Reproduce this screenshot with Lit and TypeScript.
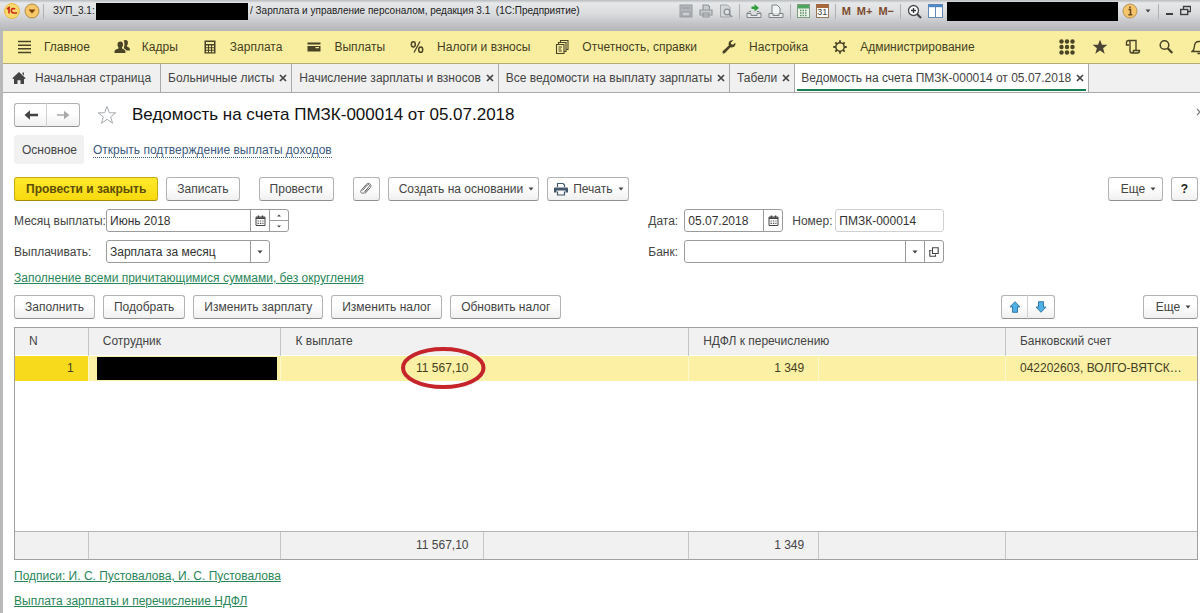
import { LitElement, html, css, svg, TemplateResult } from "lit";
import { customElement, state } from "lit/decorators.js";
import { classMap } from "lit/directives/class-map.js";

const icon = (w: number, h: number, body: unknown) =>
  html`<svg class="ic" width=${w} height=${h} viewBox="0 0 ${w} ${h}" aria-hidden="true">${body}</svg>`;

const stroke = (d: string, color = "#4a4426", width = 1.4) =>
  svg`<path d=${d} fill="none" stroke=${color} stroke-width=${width}></path>`;
const fill = (d: string, color = "#4a4426") => svg`<path d=${d} fill=${color} fill-rule="evenodd"></path>`;

const icons = {
  logo: icon(18, 18, svg`
    <circle cx="9" cy="9" r="7.5" fill="#fbd96b" stroke="#e8b94c"></circle>
    <path d="M4 7l2-1.500v6M12 7.300c-.6-1-3.700-1.300-3.700 1.300 0 2.400 1.700 2.500 5.700 2.400" fill="none" stroke="#c8261c" stroke-width="1.600"></path>`),
  circleDown: icon(16, 16, svg`
    <circle cx="8" cy="8" r="7" fill="#f8c766" stroke="#b08a4a"></circle>
    <path d="M4.500 6.500h7L8 10.500z" fill="#7a3f10"></path>`),
  save: icon(14, 14, svg`<rect x="1" y="1" width="12" height="12" fill="#b4b8bc" stroke="#989ca0"></rect>
    <path d="M3 4h8M3 8h8v4H3z" fill="#ccd0d2" stroke="#94989c"></path>`),
  printGray: icon(14, 14, svg`<path d="M4 6V1h5l1.500 1.500V6M1 6h12v5H1zM4 9h6v4H4z" fill="#c8cbcd" stroke="#94989c" stroke-width="1.200"></path>`),
  preview: icon(14, 14, svg`<path d="M1.500 1h7l2.500 2.500V13H1.500z" fill="#d4d6d8" stroke="#a2a6aa"></path>
    <circle cx="8" cy="8" r="2.800" fill="#dfe1e2" stroke="#8c9094" stroke-width="1.300"></circle><path d="M10 10l3 3" stroke="#8c9094" stroke-width="1.600"></path>`),
  linkDown: icon(16, 14, svg`<path d="M5.500 2.500h3V0L13 4 8.500 7.500v-2.500h-3z" fill="#2f9e3a"></path>
    <path d="M1 9.500h4v2h6v-2h4v4H1z" fill="#e8eaea" stroke="#7d8386"></path><path d="M1 9.500l2-2h2M15 9.500l-2-2h-2" fill="none" stroke="#7d8386"></path>`),
  linkDoc: icon(16, 14, svg`<path d="M4 9V1h5l3 3v5" fill="#f2f3f3" stroke="#7d8386"></path>
    <path d="M1 9.500h4v2h6v-2h4v4H1z" fill="#e8eaea" stroke="#7d8386"></path>`),
  calc: icon(13, 14, svg`<rect x=".5" y=".5" width="12" height="13" fill="#eef5ec" stroke="#7f9c80"></rect><rect x="1" y="1" width="11" height="3.500" fill="#4da65c"></rect>
    <path d="M3 6.500h7.500M3 9h7.500M3 11.500h7.500" stroke="#5f8f66" stroke-width="1.400" stroke-dasharray="1.500 1"></path>`),
  calendar31: html`<span class="cal31">31</span>`,
  zoomIn: icon(15, 15, svg`<circle cx="6.500" cy="6.500" r="5" fill="#fff" stroke="#4a4d50" stroke-width="1.300"></circle>
    <path d="M4 6.500h5M6.500 4v5" stroke="#333" stroke-width="1.300"></path><path d="M10 10l4 4" stroke="#444" stroke-width="2.200"></path>`),
  split: icon(15, 14, svg`<rect x=".5" y=".5" width="14" height="13" fill="#fff" stroke="#6389b4"></rect><path d="M1 2h13" stroke="#4b86c6" stroke-width="2.400"></path><path d="M7.500 2v12" stroke="#6389b4"></path>`),
  info: icon(16, 16, svg`<circle cx="8" cy="8" r="7" fill="#f5c56c" stroke="#b99455"></circle>
    <path d="M6.500 6.500h2v5M6.300 11.800h4M8 3.400v1.800" fill="none" stroke="#6b4a20" stroke-width="1.600"></path>`),
  minimize: icon(7, 12, svg`<path d="M0 9h7" stroke="#3c3e40" stroke-width="2"></path>`),
  restore: icon(11, 12, svg`<path d="M3.500 4V1.500h7V6.500H8" fill="none" stroke="#3c3e40" stroke-width="1.300"></path><rect x=".7" y="4.500" width="7" height="5" fill="none" stroke="#3c3e40" stroke-width="1.400"></rect>`),
  menu: icon(16, 16, stroke("M2 2.500h13M2 6.200h13M2 9.800h13M2 13.500h13", "#4a4426", 1.6)),
  people: icon(16, 16, fill("M6.500 2.500c2 0 2.700 1.500 2.500 3.200C8.900 7 8.300 8 8 8.300v1.200l2.500 1.200c.8.400 1 1.300 1 3.300H.5c0-2 .2-2.900 1-3.300L4.500 9.500V8.300C4 8 3.500 7 3.500 5.500 3.500 3.800 4.500 2.500 6.500 2.500zM9.500 1.600c3-1.600 5 .3 4.300 3.200-.2 1-.6 1.600-.9 1.900v.9l2 1c.8.500 1 1.200 1 2.900h-3.500c-.4-1.200-1.400-1.700-2.700-2.300.8-1.500 1.300-5.500-.2-7.600z")),
  calculator: icon(16, 16, svg`${fill("M2.500 1.500h11v13h-11zM4 3v2h8V3zM4 6.500v1.700h2V6.500zM7 6.500v1.700h2V6.500zM10 6.500v1.700h2V6.500zM4 9.200v1.600h2V9.200zM7 9.200v1.600h2V9.200zM10 9.200v1.600h2V9.200zM4 11.800v1.500h2v-1.500zM7 11.800v1.500h2v-1.500zM10 11.800v1.500h2v-1.500z")}`),
  card: icon(16, 16, fill("M1.500 3.500h13v2h-13zM1.500 7h13v5.500h-13zM9.500 8v1.200H13V8z")),
  percent: icon(16, 16, svg`<ellipse cx="4.300" cy="5.300" rx="2" ry="2.600" fill="none" stroke="#4a4426" stroke-width="1.500"></ellipse><ellipse cx="11.700" cy="10.700" rx="2" ry="2.600" fill="none" stroke="#4a4426" stroke-width="1.500"></ellipse><path d="M11 2.500l-6 11" stroke="#4a4426" stroke-width="1.300"></path>`),
  reports: icon(16, 16, svg`${stroke("M2.500 5.500h7.500v9H2.500zM4.500 5V3.500H12v9h-1.500M6.500 3V1.500H14v9h-1.500", "#4a4426", 1.1)}${stroke("M4.500 8h3.500M4.500 10h2.500M4.500 12h3.500", "#4a4426", 1)}`),
  wrench: icon(16, 16, fill("M14.300 3.700l-2.400 2-1.800-.6-.3-1.700L12.300 1.500C9.800.8 7.300 2.500 7.600 5.300c0 .6.100.9.200 1.200L1.900 11.900c-1.500 1.500.6 3.600 2.100 2.200l5.500-5.900c3 .900 5.700-1.500 4.800-4.500z")),
  gear: icon(16, 16, svg`<circle cx="8" cy="8" r="4.200" fill="none" stroke="#4a4426" stroke-width="1.500"></circle>
    <path d="M8 1.300v2.500M8 12.200v2.500M1.300 8h2.500M12.200 8h2.500M3.300 3.300l1.700 1.700M11 11l1.700 1.700M3.300 12.700L5 11M11 5l1.700-1.700" stroke="#4a4426" stroke-width="1.800"></path>`),
  apps: icon(16, 16, svg`${[2.5, 8, 13.5].map((y) => [2.5, 8, 13.5].map((x) => svg`<circle cx=${x} cy=${y} r="2.200" fill="#4a4426"></circle>`))}`),
  star: icon(16, 16, fill("M8 .8l2 5h5.400l-4.300 3.400 1.600 5.500L8 11.500l-4.700 3.200 1.600-5.500L.6 5.800H6z", "#4a4436")),
  scroll: icon(16, 16, stroke("M4 6H1.500V3.500c0-1.200.8-2 2-2H11v9.500M3.500 1.500C4.500 1.500 5 2.500 5 3.500v8c0 1.600.6 2.500 2 2.500h5.500c1.200 0 2-.8 2-2.500H8.500c0 1.500-.5 2.500-1.500 2.500")),
  search: icon(16, 16, svg`<circle cx="6.500" cy="6" r="4.300" fill="none" stroke="#4a4426" stroke-width="1.500"></circle><path d="M9.700 9.300l4.600 4.700" stroke="#4a4426" stroke-width="2.300"></path>`),
  bell: icon(16, 16, stroke("M1 12.500h14c-2-1.500-2.500-3-2.500-5.500 0-3-1.500-4.500-4.500-4.500S3.500 4 3.500 7c0 2.500-.5 4-2.500 5.500zM6.500 14.500h3")),
  home: icon(14, 14, fill("M7 1l6.700 6.200-1 1L12 7.600V13H8.500V9.300h-3V13H2V7.600l-.7.600-1-1zM10.500 1.500H12v3l-1.500-1.400z", "#444")),
  arrowLeft: icon(14, 10, fill("M6 .3v3.500h8v2.400H6v3.500L.5 5z", "#444")),
  arrowRight: icon(14, 10, fill("M8 .8v3.400H1v1.600h7v3.400L13.500 5z", "#a9a9a9")),
  starOutline: icon(22, 20, stroke("M11 1.500l2.400 6.300h6.400l-5.200 4 2 6.500-5.600-4-5.600 4 2-6.500-5.200-4h6.400z", "#a5abb0", 1)),
  clip: icon(14, 14, stroke("M3.500 8.500L8.300 3c1.300-1.300 3 .2 1.800 1.600L5.800 9.500M8.800 6.500l-3.600 4c-1.900 2-4.700-.2-2.900-2.400l5-5.700c2.400-2.700 6.300.4 3.900 3.300l-5.300 6", "#666", 1)),
  print: icon(14, 14, svg`${fill("M1 5.500h12c.6 0 1 .4 1 1v4h-2.500v-2h-9v2H0v-4c0-.6.4-1 1-1z", "#44586c")}${stroke("M3.500 5V1.500h5.500l1.500 1.500v2M3.500 9.500v3.500h7V9.500", "#44586c", 1.2)}`),
  cal: icon(11, 11, svg`<path d="M1 2h9v8.500H1z" fill="#fff" stroke="#444"></path><path d="M1 3.300h9M3.500.5v2M7.500.5v2" stroke="#444" stroke-width="1.500"></path><path d="M2.500 6h6M2.500 8.300h6" stroke="#555" stroke-width="1.200" stroke-dasharray="1.400 1"></path>`),
  open: icon(10, 10, svg`<path d="M3.500.8h5.700v5.700H3.500z" fill="none" stroke="#444" stroke-width="1.100"></path><path d="M2.500 3.500H.8v5.700h5.700V7.500" fill="none" stroke="#444" stroke-width="1.100"></path>`),
  caret: icon(6, 4, fill("M.5.5h5L3 3.500z", "#444")),
  tinyUp: icon(4, 3, fill("M0 2.500h4L2 .5z", "#444")),
  tinyDown: icon(4, 3, fill("M0 .5h4L2 2.500z", "#444")),
  blueUp: icon(12, 12, svg`<path d="M6 .7l5 5.200H8.500v5.400h-5V5.900H1z" fill="#4fb0e6" stroke="#2a6f9f" stroke-width=".9"></path>`),
  blueDown: icon(12, 12, svg`<path d="M6 11.300l5-5.200H8.500V.7h-5v5.400H1z" fill="#4fb0e6" stroke="#2a6f9f" stroke-width=".9"></path>`),
  close: icon(8, 8, stroke("M1 1l6 6M7 1L1 7", "#444", 1.7)),
  closeThin: icon(8, 8, stroke("M1 1l6 6M7 1L1 7", "#777", 1.2)),
};

const shared = css`
  :host {
    font-family: "Liberation Sans", Arial, sans-serif;
    font-size: 12px;
    line-height: 16px;
    color: #444;
  }
  * { box-sizing: border-box; }
  .ic { display: block; flex: none; }
  button {
    font: inherit;
    color: inherit;
    margin: 0;
    padding: 0;
    border: 0;
    background: none;
    white-space: nowrap;
    display: flex;
    align-items: center;
    justify-content: center;
  }
`;

@customElement("window-title")
class WindowTitle extends LitElement {
  static styles = [shared, css`
    :host {
      display: flex;
      align-items: flex-start;
      height: 31px;
      padding: 0 9px 0 3px;
      overflow: hidden;
      color: #222;
      background: linear-gradient(#b9bcbf 0, #e6e8e9 3px, #d9dbdd 14px, #c3c5c8 23px, #b4b6b9 31px);
    }
    .row { display: flex; align-items: center; height: 22px; }
    .title { flex: 1; font-size: 10px; white-space: nowrap; }
    .title button { margin-right: 3px; }
    .sep { width: 1px; height: 15px; background: #aeb1b4; }
    .name { width: 52px; padding-left: 9px; }
    .mask { background: #000; }
    .short { width: 152px; height: 17px; margin-right: 2px; }
    .long { width: 171px; height: 19px; margin: 0 4px; }
    .tools { gap: 6px; }
    .m { font-size: 11px; font-weight: 700; color: #7d4b2c; }
    .wins { gap: 7px; }
    .cal31 {
      display: block;
      width: 13px;
      height: 14px;
      border: 1px solid #94765a;
      border-top: 4px solid #a5673b;
      background: #fff;
      font-size: 9px;
      font-weight: 400;
      line-height: 9px;
      text-align: center;
      color: #444;
    }
  `];
  render() {
    const tool = (label: string, body: unknown) => html`<button class="m" aria-label=${label}>${body}</button>`;
    const sep = html`<span class="sep"></span>`;
    return html`
      <div class="row title">
        <button aria-label="1С">${icons.logo}</button>
        <button aria-label="Меню">${icons.circleDown}</button>
        ${sep}<span class="name">ЗУП_3.1:</span><span class="mask short"></span>
        <span>/ Зарплата и управление персоналом, редакция 3.1&nbsp; (1С:Предприятие)</span>
      </div>
      <div class="row tools">
        ${tool("Сохранить", icons.save)}${tool("Печать", icons.printGray)}${tool("Просмотр", icons.preview)}${sep}
        ${tool("Получить ссылку", icons.linkDown)}${tool("Перейти по ссылке", icons.linkDoc)}${sep}
        ${tool("Калькулятор", icons.calc)}${tool("Календарь", icons.calendar31)}${sep}
        ${tool("M", "M")}${tool("M+", "M+")}${tool("M-", "M−")}${sep}
        ${tool("Масштаб", icons.zoomIn)}${tool("Окна", icons.split)}
      </div>
      <div class="row"><span class="mask long"></span></div>
      <div class="row wins">
        ${tool("Информация", icons.info)}${tool("Еще", icons.caret)}${sep}
        ${tool("Свернуть", icons.minimize)}${tool("Восстановить", icons.restore)}
      </div>`;
  }
}

@customElement("section-bar")
class SectionBar extends LitElement {
  static styles = [shared, css`
    :host {
      display: flex;
      justify-content: space-between;
      height: 33px;
      margin-left: 3px;
      padding-left: 13px;
      overflow: hidden;
      background: #f9eea0;
      border-bottom: 1px solid #b3ab77;
      color: #443f22;
    }
    .group { display: flex; align-items: center; gap: 24px; }
    .group button { gap: 12px; }
    .right { gap: 17px; margin-right: -7px; }
  `];
  sections: [string, TemplateResult][] = [
    ["Главное", icons.menu], ["Кадры", icons.people], ["Зарплата", icons.calculator], ["Выплаты", icons.card],
    ["Налоги и взносы", icons.percent], ["Отчетность, справки", icons.reports], ["Настройка", icons.wrench],
    ["Администрирование", icons.gear],
  ];
  tools: [string, TemplateResult][] = [
    ["Функции", icons.apps], ["Избранное", icons.star], ["История", icons.scroll], ["Поиск", icons.search], ["Оповещения", icons.bell],
  ];
  render() {
    return html`
      <nav class="group">${this.sections.map(([t, i]) => html`<button>${i}<span>${t}</span></button>`)}</nav>
      <div class="group right">${this.tools.map(([t, i]) => html`<button aria-label=${t}>${i}</button>`)}</div>`;
  }
}

@customElement("tab-strip")
class TabStrip extends LitElement {
  static styles = [shared, css`
    :host {
      display: flex;
      height: 29px;
      margin-left: 3px;
      overflow: hidden;
      background: #f0f0f0;
      border-bottom: 1px solid #a9a9a9;
    }
    .tab {
      display: flex;
      align-items: center;
      padding: 0 4px 0 7px;
      border-right: 1px solid #a9a9a9;
    }
    .tab.home { padding: 0 9px; }
    .tab.active { background: #fff; padding: 0 2px; }
    .tab.active .in { border-bottom: 2px solid #178050; padding: 2px 2px 0 4px; }
    .in { display: flex; align-items: center; gap: 5px; height: 26px; }
    .label { gap: 9px; }
  `];
  tabs = ["Больничные листы", "Начисление зарплаты и взносов", "Все ведомости на выплату зарплаты", "Табели",
    "Ведомость на счета ПМЗК-000014 от 05.07.2018"];
  @state() active = 4;
  render() {
    return html`
      <div class="tab home"><button class="label">${icons.home}<span>Начальная страница</span></button></div>
      ${this.tabs.map((t, i) => html`
        <div class=${classMap({ tab: true, active: i === this.active })}>
          <div class="in">
            <button class="label" @click=${() => (this.active = i)}>${t}</button>
            <button aria-label="Закрыть">${icons.close}</button>
          </div>
        </div>`)}`;
  }
}

@customElement("payroll-table")
class PayrollTable extends LitElement {
  static styles = [shared, css`
    :host { display: block; border: 1px solid #a0a0a0; }
    table { width: 100%; table-layout: fixed; border-collapse: collapse; }
    .c1 { width: 6.2%; } .c2 { width: 16.3%; } .c3 { width: 17.1%; } .c4 { width: 17.4%; }
    .c5 { width: 11%; } .c6 { width: 15.8%; }
    th, td { padding: 0 14px; text-align: left; font-weight: 400; white-space: nowrap; overflow: hidden; text-overflow: ellipsis; }
    th { height: 27px; background: #f1f1f1; }
    th + th, tfoot td + td { border-left: 1px solid #c6c6c6; }
    tbody td { height: 26px; background: #fbf0a4; color: #443f22; border-top: 1px solid #fff; border-bottom: 1px solid #fff; }
    tbody td + td { border-left: 1px solid #fdf7cf; }
    tbody .num0 { background: #f8da1c; }
    tbody .blank { height: 150px; background: #fff; border: 0; }
    tfoot td { height: 28px; background: #f1f1f1; border-top: 1px solid #b4b4b4; }
    td.num { text-align: right; }
    tbody td.who { padding: 1px 3px 1px 8px; }
    .mask { display: block; height: 23px; background: #000; }
    tbody td.marked { overflow: visible; }
    .mark { position: relative; }
    .ring { position: absolute; left: -15px; top: -14px; width: calc(100% + 32px); height: 42px; overflow: visible; }
  `];
  render() {
    return html`
      <table>
        <colgroup><col class="c1"><col class="c2"><col class="c3"><col class="c4"><col class="c5"><col class="c6"><col></colgroup>
        <thead><tr><th>N</th><th>Сотрудник</th><th colspan="2">К выплате</th><th colspan="2">НДФЛ к перечислению</th><th>Банковский счет</th></tr></thead>
        <tbody>
          <tr>
            <td class="num num0">1</td>
            <td class="who"><span class="mask"></span></td>
            <td class="num marked"><span class="mark">11 567,10
              <svg class="ring" viewBox="0 0 84 42" preserveAspectRatio="none" aria-hidden="true"><ellipse cx="42" cy="21" rx="40" ry="19" fill="none" stroke="#c5242b" stroke-width="4"></ellipse></svg></span></td>
            <td></td><td class="num">1 349</td><td></td>
            <td>042202603, ВОЛГО-ВЯТСК…</td>
          </tr>
          <tr><td class="blank" colspan="7"></td></tr>
        </tbody>
        <tfoot><tr><td></td><td></td><td class="num">11 567,10</td><td></td><td class="num">1 349</td><td></td><td></td></tr></tfoot>
      </table>`;
  }
}

@customElement("app-root")
class AppRoot extends LitElement {
  static styles = [shared, css`
    :host { display: block; min-height: 100vh; background: linear-gradient(90deg, #b9b9b9 3px, #fff 3px); overflow: hidden; }
    .page { padding: 10px 2px 4px 14px; }
    .bar { display: flex; align-items: center; gap: 8px; }
    .push { margin-left: auto; }
    .btn {
      height: 24px;
      padding: 0 10px;
      border: 1px solid #b3b3b3;
      border-bottom-color: #8f8f8f;
      border-radius: 3px;
      background: linear-gradient(#fff 40%, #f0f0f0);
      gap: 5px;
    }
    .btn.main { padding: 0 11px; font-weight: 700; color: #5c4d00; border-color: #c9ab10; border-bottom-color: #a58a05; background: linear-gradient(#ffe92e, #f7d90d); }
    .btn.wide { margin: 0 11px; }
    .btn.menu { min-width: 55px; padding-right: 4px; }
    .btn.pic { padding-left: 6px; }
    .btn.sq { width: 27px; padding: 0; }
    .btn.help { font-weight: 700; color: #222; }
    .pair { display: flex; }
    .pair .btn { width: 33px; padding: 0; }
    .pair .btn:first-child { border-radius: 3px 0 0 3px; border-right-color: #d0d0d0; }
    .pair .btn:last-child { border-radius: 0 3px 3px 0; border-left: 0; }
    .pair.small { margin-right: 80px; }
    .pair.small .btn { width: 27px; }
    h1 { margin: 0; font-size: 17px; line-height: 24px; font-weight: 400; color: #111; white-space: nowrap; }
    .head button.fav { margin: 0 6px 0 8px; }
    .closex { height: 18px; margin-right: -6px; align-self: flex-start; }
    .subnav { margin-top: 8px; gap: 9px; }
    .current { background: #f1f1f1; padding: 7px 7px 6px 8px; border-radius: 3px; }
    .subnav a { padding-top: 2px; color: #3c5a80; text-decoration: none; border-bottom: 1px dotted #3c5a80; line-height: 13px; }
    .cmds { margin-top: 13px; }
    .form { display: grid; grid-template-columns: 15fr 13fr; row-gap: 8px; margin-top: 8px; }
    .field { display: flex; align-items: center; }
    .field label { width: 92px; }
    .field.r label { width: 36px; }
    .field.r label.no { width: 43px; margin-left: 9px; }
    .box { display: flex; height: 23px; border: 1px solid #9b9b9b; border-radius: 3px; background: #fff; overflow: hidden; }
    .box.ro { border-color: #d0d0d0; }
    .box input, .box select {
      font: inherit; color: #333; border: 0; outline: 0; background: none; padding: 0 3px; margin: 0; min-width: 0; width: 100%; appearance: none;
    }
    .box > button, .arrow { width: 19px; flex: none; border-left: 1px solid #9b9b9b; display: flex; align-items: center; justify-content: center; }
    .w-month { width: 183px; }
    .w-pay { width: 164px; }
    .w-date { width: 99px; }
    .w-no { width: 109px; }
    .w-bank { width: 260px; }
    .spin { display: flex; flex-direction: column; width: 19px; flex: none; border-left: 1px solid #9b9b9b; }
    .spin button { flex: 1; }
    .spin button + button { border-top: 1px solid #9b9b9b; }
    .green { color: #2a8659; text-decoration: underline; }
    .fillmode { display: flex; margin: 7px 0 9px; }
    payroll-table { margin: 8px 0; }
    .links { display: flex; flex-direction: column; align-items: flex-start; gap: 9px; }
  `];
  render() {
    const caret = icons.caret;
    return html`
      <window-title></window-title>
      <section-bar></section-bar>
      <tab-strip></tab-strip>
      <main class="page">
        <div class="bar head">
          <div class="pair"><button class="btn" aria-label="Назад">${icons.arrowLeft}</button><button class="btn" aria-label="Вперед">${icons.arrowRight}</button></div>
          <button class="fav" aria-label="В избранное">${icons.starOutline}</button>
          <h1>Ведомость на счета ПМЗК-000014 от 05.07.2018</h1>
          <button class="push closex" aria-label="Закрыть">${icons.closeThin}</button>
        </div>
        <div class="bar subnav"><span class="current">Основное</span><a href="#">Открыть подтверждение выплаты доходов</a></div>
        <div class="bar cmds">
          <button class="btn main">Провести и закрыть</button>
          <button class="btn">Записать</button>
          <button class="btn wide">Провести</button>
          <button class="btn sq" aria-label="Файлы">${icons.clip}</button>
          <button class="btn menu">Создать на основании ${caret}</button>
          <button class="btn menu pic">${icons.print}Печать ${caret}</button>
          <button class="btn menu push">Еще ${caret}</button>
          <button class="btn sq help">?</button>
        </div>
        <div class="form">
          <div class="field"><label for="month">Месяц выплаты:</label>
            <div class="box w-month"><input id="month" value="Июнь 2018"><button aria-label="Календарь">${icons.cal}</button>
              <span class="spin"><button aria-label="Больше">${icons.tinyUp}</button><button aria-label="Меньше">${icons.tinyDown}</button></span></div></div>
          <div class="field r"><label for="date">Дата:</label>
            <div class="box w-date"><input id="date" value="05.07.2018"><button aria-label="Календарь">${icons.cal}</button></div>
            <label class="no" for="no">Номер:</label><div class="box ro w-no"><input id="no" value="ПМЗК-000014"></div></div>
          <div class="field"><label for="pay">Выплачивать:</label>
            <div class="box w-pay"><select id="pay"><option>Зарплата за месяц</option></select><span class="arrow">${caret}</span></div></div>
          <div class="field r"><label for="bank">Банк:</label>
            <div class="box w-bank"><input id="bank"><button aria-label="Выбрать">${caret}</button><button aria-label="Открыть">${icons.open}</button></div></div>
        </div>
        <div class="fillmode"><a class="green" href="#">Заполнение всеми причитающимися суммами, без округления</a></div>
        <div class="bar">
          ${["Заполнить", "Подобрать", "Изменить зарплату", "Изменить налог", "Обновить налог"].map((t) => html`<button class="btn">${t}</button>`)}
          <div class="pair small push"><button class="btn" aria-label="Вверх">${icons.blueUp}</button><button class="btn" aria-label="Вниз">${icons.blueDown}</button></div>
          <button class="btn menu">Еще ${caret}</button>
        </div>
        <payroll-table></payroll-table>
        <div class="links">
          <a class="green" href="#">Подписи: И. С. Пустовалова, И. С. Пустовалова</a>
          <a class="green" href="#">Выплата зарплаты и перечисление НДФЛ</a>
        </div>
      </main>`;
  }
}
